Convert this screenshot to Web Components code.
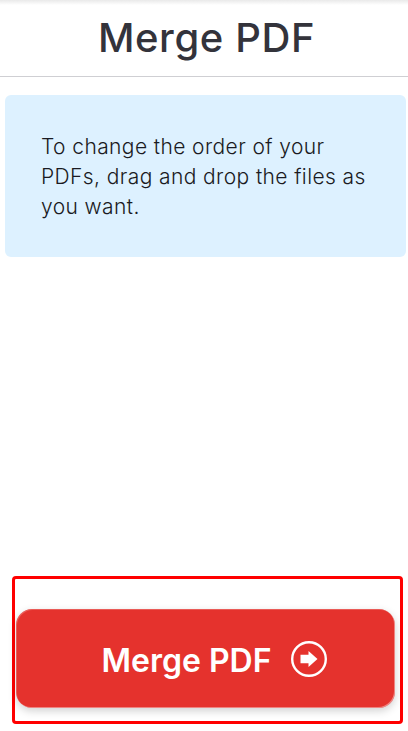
<!DOCTYPE html>
<html lang="en">
<head>
<meta charset="utf-8">
<title>Merge PDF</title>
<style>
  html, body { margin: 0; height: 100%; background: #fff; }
  body { font-family: Inter, "Noto Sans", sans-serif; overflow: hidden; }
</style>
</head>
<body>
<merge-page>
  <page-title slot="title">Merge PDF</page-title>
  <info-note slot="note">To change the order of your PDFs, drag and drop the files as you want.</info-note>
  <process-button slot="action">Merge PDF</process-button>
</merge-page>
<script>
class MergePage extends HTMLElement {
  constructor() {
    super();
    this.attachShadow({ mode: 'open' });
    this.shadowRoot.innerHTML = `
      <style>
        :host {
          display: flex;
          flex-direction: column;
          height: 731px;
          box-sizing: border-box;
        }
        .note {
          padding: 18px 2px 0 5px;
        }
        .spacer {
          flex: 1;
        }
        .action {
          box-sizing: border-box;
          width: 391px;
          height: 148px;
          margin: 0 0 7px 12px;
          padding: 30px 5px 13px 1px;
          border: 3px solid #ff0000;
          border-radius: 4px;
        }
      </style>
      <slot name="title"></slot>
      <div class="note"><slot name="note"></slot></div>
      <div class="spacer"></div>
      <div class="action"><slot name="action"></slot></div>
    `;
  }
}
customElements.define('merge-page', MergePage);

class PageTitle extends HTMLElement {
  constructor() {
    super();
    this.attachShadow({ mode: 'open' });
    this.shadowRoot.innerHTML = `
      <style>
        :host {
          display: block;
        }
        .bar {
          height: 77px;
          box-sizing: border-box;
          padding: 0 0 2px 5px;
          border-bottom: 1px solid #cfcfd3;
          background: linear-gradient(#e9e9e9, #fff 5px);
          display: flex;
          align-items: center;
          justify-content: center;
          text-align: center;
          font-size: 40px;
          font-weight: 550;
          letter-spacing: .6px;
          color: #33333b;
        }
      </style>
      <div class="bar"><slot></slot></div>
    `;
  }
}
customElements.define('page-title', PageTitle);

class InfoNote extends HTMLElement {
  constructor() {
    super();
    this.attachShadow({ mode: 'open' });
    this.shadowRoot.innerHTML = `
      <style>
        :host {
          display: block;
          box-sizing: border-box;
          height: 162px;
          padding: 37px 36px 0;
          border-radius: 6px;
          background: #ddf1ff;
          color: #1a1a22;
          font-size: 21px;
          font-weight: 350;
          letter-spacing: .4px;
          line-height: 30px;
        }
      </style>
      <slot></slot>
    `;
  }
}
customElements.define('info-note', InfoNote);

class ProcessButton extends HTMLElement {
  constructor() {
    super();
    this.attachShadow({ mode: 'open' });
    this.shadowRoot.innerHTML = `
      <style>
        :host {
          display: flex;
          align-items: center;
          justify-content: center;
          gap: 19px;
          box-sizing: border-box;
          height: 99px;
          padding-left: 17px;
          border-radius: 16px;
          background: #e5322d;
          box-shadow: inset -1px -1px 0 rgba(255, 255, 255, .4), inset 1px 1px 0 rgba(255, 255, 255, .2), 0 3px 8px rgba(0, 0, 0, .18);
          color: #fff;
          font-size: 32px;
          font-weight: 600;
        }
        span {
          padding-top: 4px;
        }
        svg {
          width: 36px;
          height: 36px;
          display: block;
        }
      </style>
      <span><slot></slot></span>
      <svg viewBox="0 0 36 36" aria-hidden="true">
        <circle cx="18" cy="18" r="16.8" fill="none" stroke="#fff" stroke-width="2.4"/>
        <path d="M9.500 13.800h8V10L26.500 18l-9 8V22.200h-8z" fill="#fff"/>
      </svg>
    `;
  }
}
customElements.define('process-button', ProcessButton);
</script>
</body>
</html>
